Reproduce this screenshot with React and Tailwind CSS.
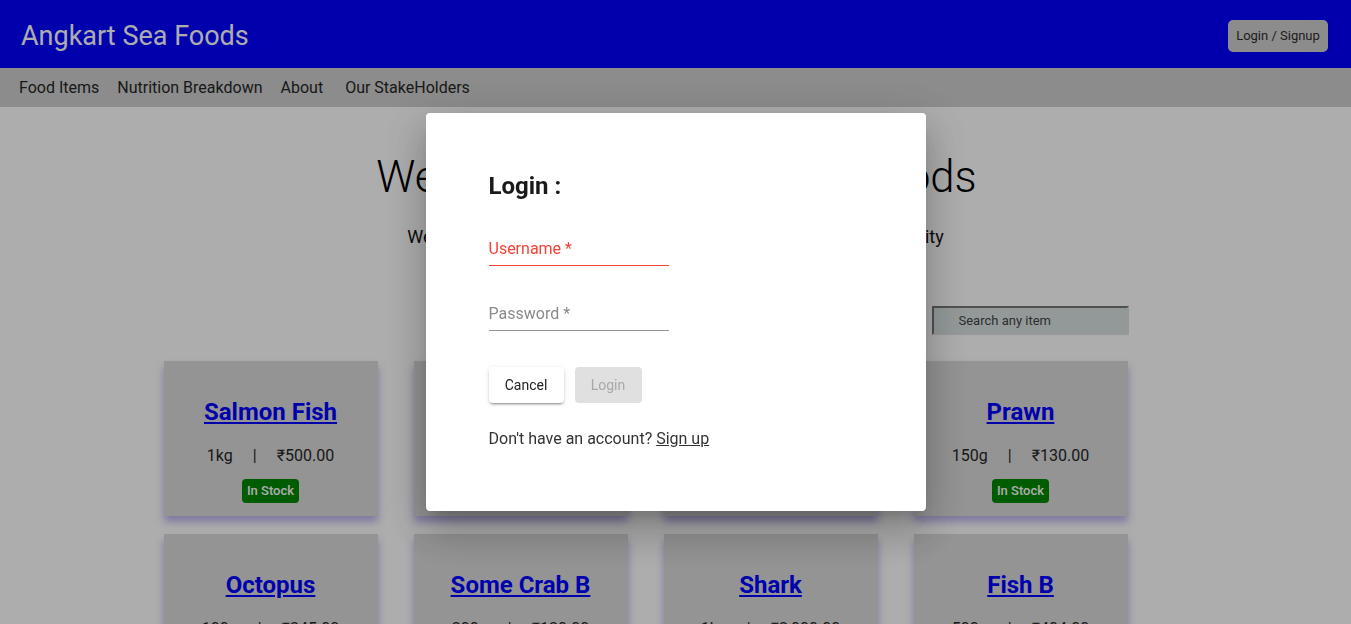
import React from 'react';

const items = [
  { name: 'Salmon Fish', qty: '1kg', price: '₹500.00' },
  { name: 'Tuna Fish', qty: '500g', price: '₹320.00' },
  { name: 'Crab A', qty: '250g', price: '₹180.00' },
  { name: 'Prawn', qty: '150g', price: '₹130.00' },
  { name: 'Octopus', qty: '100g', price: '₹245.00' },
  { name: 'Some Crab B', qty: '200g', price: '₹120.00' },
  { name: 'Shark', qty: '1kg', price: '₹2,000.00' },
  { name: 'Fish B', qty: '500g', price: '₹404.00' },
];

function ItemCard({ item }) {
  return (
    <div className="w-[214px] h-[155px] bg-[#dadada] shadow-[0_6px_8px_rgba(60,40,200,0.35)] flex flex-col items-center pt-[35px]">
      <a href="#" className="text-[24px] leading-[32px] font-bold text-[#0000ff] underline">
        {item.name}
      </a>
      <div className="mt-[16px] flex gap-[20px] text-[16px] leading-[24px] text-[#262626]">
        <span>{item.qty}</span>
        <span>|</span>
        <span>{item.price}</span>
      </div>
      <span className="mt-[11px] h-[24px] px-[5px] rounded-[4px] bg-[#008800] text-white text-[13px] font-medium leading-[24px]">
        In Stock
      </span>
    </div>
  );
}

export default function App() {
  return (
    <div className="relative min-h-[624px] bg-white overflow-hidden" style={{ fontFamily: 'Roboto, "Liberation Sans", sans-serif' }}>
      <header className="h-[68px] bg-[#0000ff] flex items-center justify-between pt-[4px] pl-[21px] pr-[23px]">
        <h1 className="text-[27px] text-white">Angkart Sea Foods</h1>
        <button className="h-[32px] w-[100px] rounded-[5px] bg-[#cecece] text-[13px] text-[#2e2e2e]">Login / Signup</button>
      </header>
      <nav className="h-[39px] bg-[#cecece] flex items-center gap-[18px] pl-[19px] text-[16px] text-[#262626]">
        <span>Food Items</span>
        <span>Nutrition Breakdown</span>
        <span>About</span>
        <span className="ml-[4px]">Our StakeHolders</span>
      </nav>

      <main className="flex flex-col items-center pt-[43px]">
        <h2 className="pl-[2px] text-[43.6px] leading-[56px] font-light text-black">Welcome to Angkart Sea Foods</h2>
        <p className="mt-[18px] text-[18px] leading-[26px] text-[#111]">We provide you the freshest sea foods of the finest and best quality</p>

        <div className="w-[1024px] mt-[56px]">
          <div className="w-[965px] flex justify-end">
            <input
              placeholder="Search any item"
              className="w-[197px] h-[29px] pl-[25px] bg-[#d9e2e2] border-2 border-t-[#777] border-l-[#777] border-r-[#e0e0e0] border-b-[#e0e0e0] text-[13px] placeholder:text-[#444] outline-none"
            />
          </div>
          <div className="mt-[26px] grid grid-cols-[repeat(4,214px)] gap-x-[36px] gap-y-[18px]">
            {items.map((item) => (
              <ItemCard key={item.name} item={item} />
            ))}
          </div>
        </div>
      </main>

      <div className="fixed inset-0 bg-black/[0.32] flex items-center justify-center">
        <div className="w-[500px] bg-white rounded-[4px] shadow-[0_11px_15px_-7px_rgba(0,0,0,0.2),0_24px_38px_3px_rgba(0,0,0,0.14),0_9px_46px_8px_rgba(0,0,0,0.12)] pt-[57px] pb-[60px] px-[63px]">
          <h3 className="text-[24px] leading-[32px] font-bold text-[#1a1a1a]">Login :</h3>
          <div className="mt-[35px] w-[180px] border-b border-[#f44336] pb-[4px]">
            <span className="block text-[16px] leading-[24px] text-[#f44336]">Username *</span>
          </div>
          <div className="mt-[36px] w-[180px] border-b border-[#949494] pb-[4px]">
            <span className="block text-[16px] leading-[24px] text-[#8a8a8a]">Password *</span>
          </div>
          <div className="mt-[36px] flex gap-[11px]">
            <button className="h-[36px] w-[75px] rounded-[4px] bg-white text-[14px] text-[#222] shadow-[0_3px_1px_-2px_rgba(0,0,0,0.2),0_2px_2px_0_rgba(0,0,0,0.14),0_1px_5px_0_rgba(0,0,0,0.12)]">
              Cancel
            </button>
            <button className="h-[36px] w-[67px] rounded-[4px] bg-[#e0e0e0] text-[14px] text-[#a8a8a8]">
              Login
            </button>
          </div>
          <p className="mt-[24px] text-[16px] leading-[24px] text-[#333]">
            Don't have an account? <a href="#" className="underline text-[#333]">Sign up</a>
          </p>
        </div>
      </div>
    </div>
  );
}
